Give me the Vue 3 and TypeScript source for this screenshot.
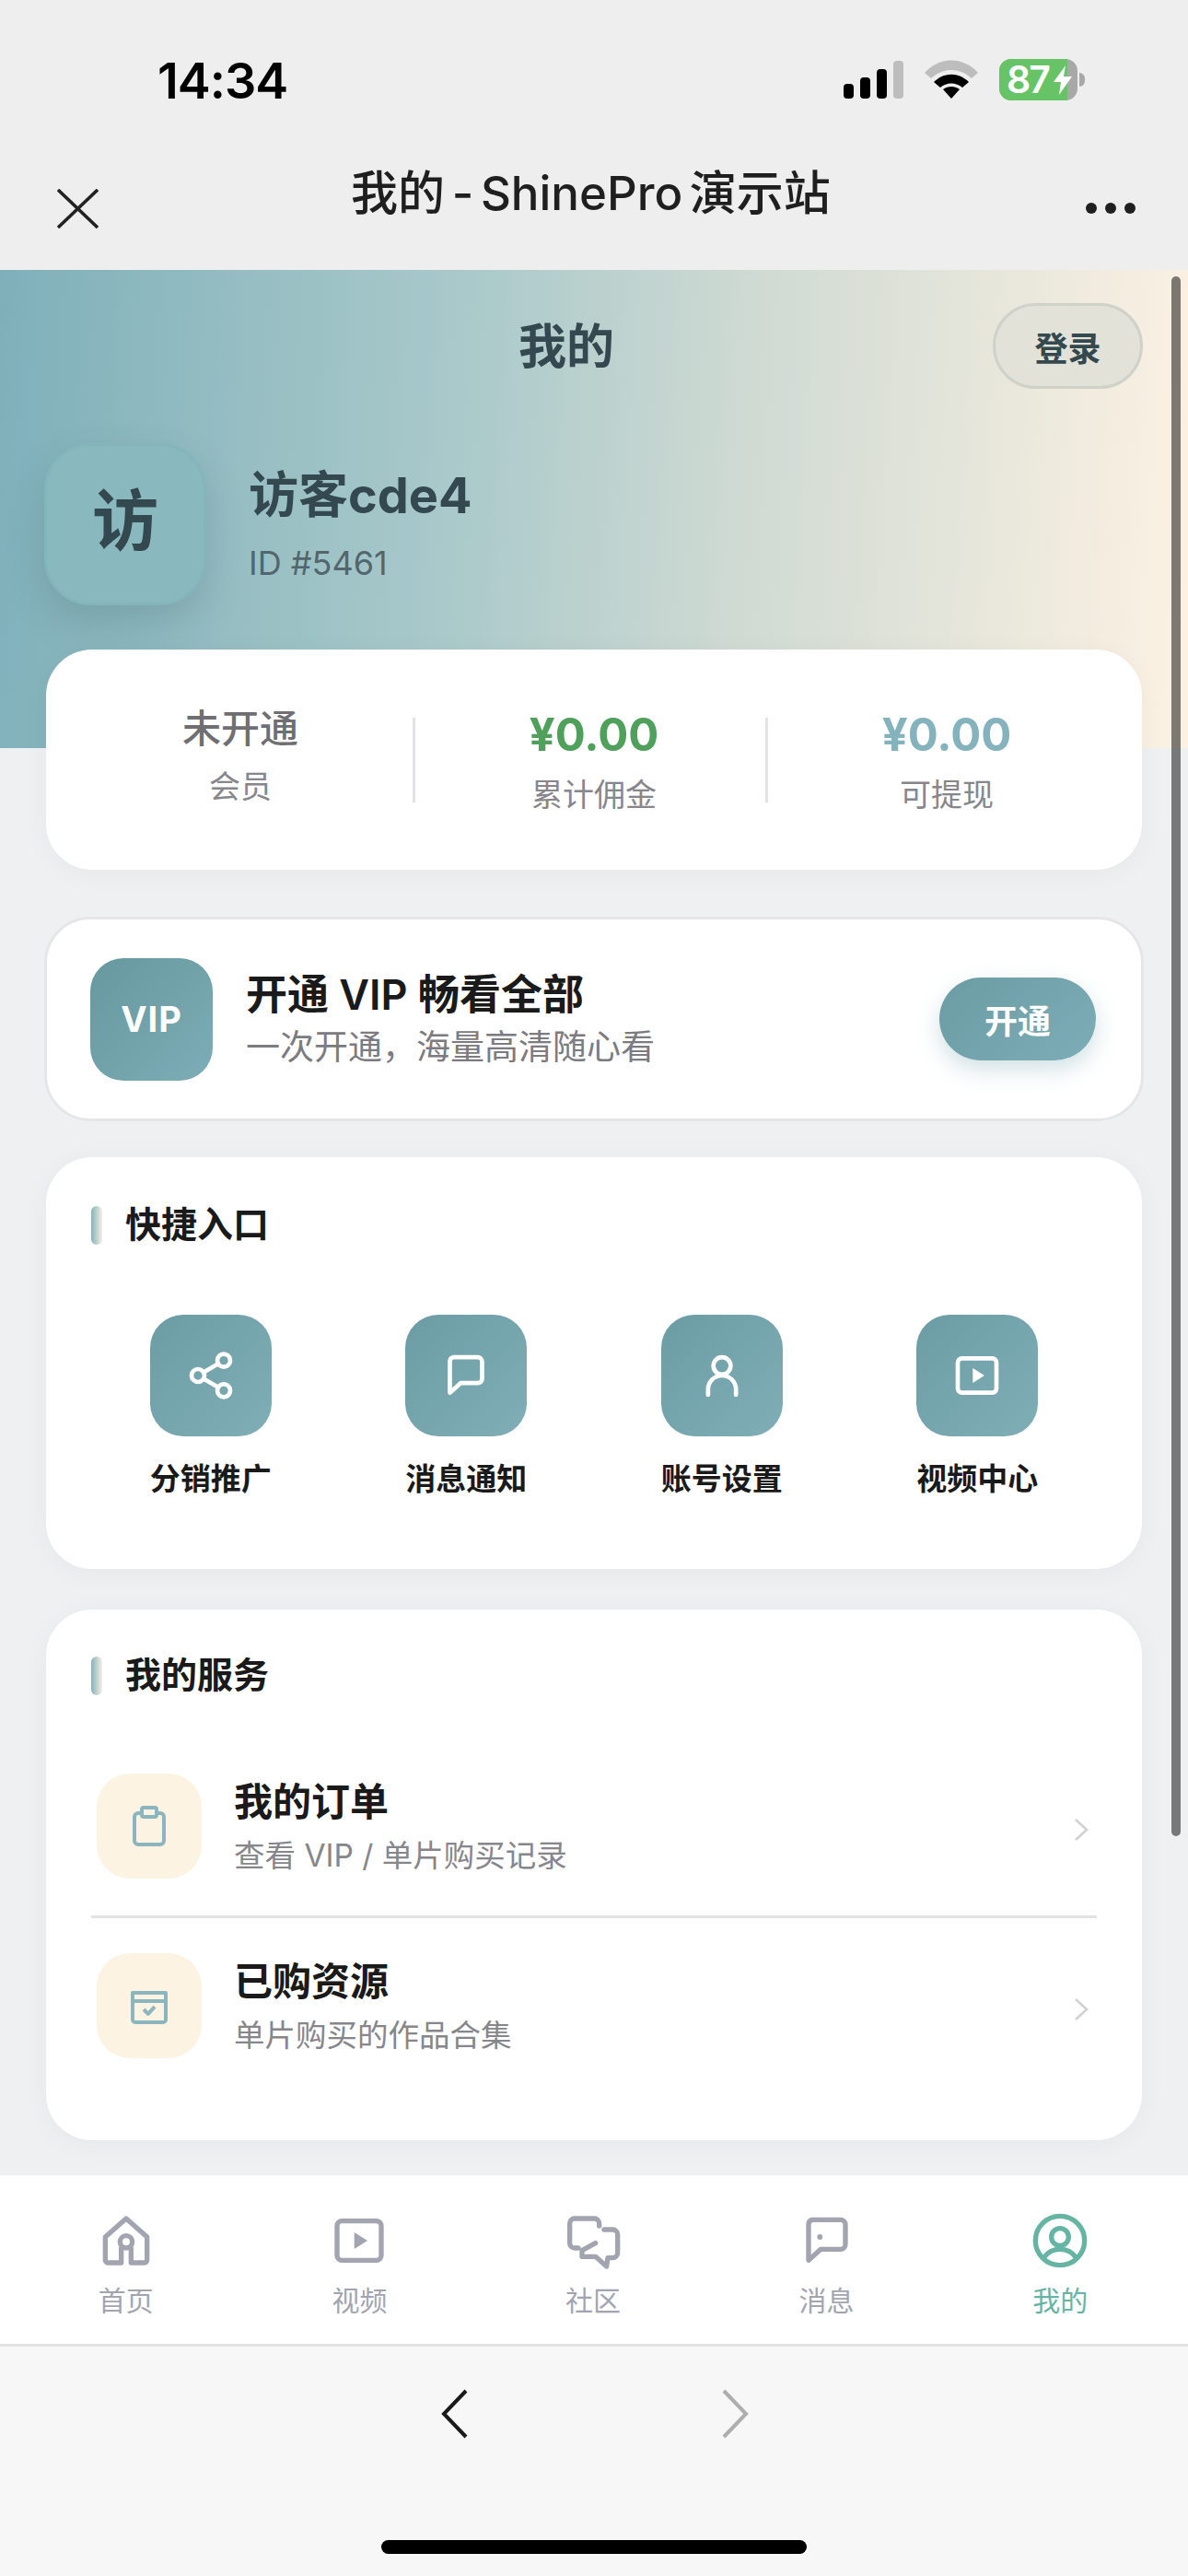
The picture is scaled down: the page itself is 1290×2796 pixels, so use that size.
<template>
  <div class="page">
    <header class="top">
      <div class="status">
        <span class="time">14:34</span>
        <div class="status-icons">
          <svg class="signal" width="65" height="41" viewBox="0 0 65 41">
            <rect x="0" y="25" width="11" height="16" rx="4" fill="#000" />
            <rect x="18" y="18" width="11" height="23" rx="4" fill="#000" />
            <rect x="36" y="9" width="11" height="32" rx="4" fill="#000" />
            <rect x="54" y="0" width="11" height="41" rx="4" fill="#bdbdbd" />
          </svg>
          <svg class="wifi" width="58" height="42" viewBox="0 0 58 42">
            <path d="M0 14 C16 -4 42 -4 58 14 L51 20 C38 8 20 8 7 20 Z" fill="#bdbdbd" />
            <path d="M10 24 C21 13 37 13 48 24 L41 30 C34 24 24 24 17 30 Z" fill="#000" />
            <path d="M20 32 C25 28 33 28 38 32 L29 42 Z" fill="#000" />
          </svg>
          <div class="battery">
            <div class="battery-fill"></div>
            <span class="battery-num">87</span>
            <svg class="bolt" width="22" height="32" viewBox="0 0 22 32">
              <path d="M14 0 L1 18 H9 L7 32 L21 12 H12 Z" fill="#fff" />
            </svg>
            <i class="battery-nub"></i>
          </div>
        </div>
      </div>
      <div class="nav">
        <svg class="close" width="45" height="43" viewBox="0 0 45 43">
          <path d="M1 1 L44 42 M44 1 L1 42" stroke="#222" stroke-width="3.6" fill="none" />
        </svg>
        <div class="nav-title">我的 - ShinePro 演示站</div>
        <div class="dots"><i></i><i></i><i></i></div>
      </div>
    </header>

    <main class="main">
      <section class="hero">
        <div class="hero-bar">
          <div class="hero-title">我的</div>
          <button class="login">登录</button>
        </div>
        <div class="profile">
          <div class="avatar"><span>访</span></div>
          <div class="profile-text">
            <div class="name">访客cde4</div>
            <div class="uid">ID #5461</div>
          </div>
        </div>
      </section>

      <div class="cards">
        <section class="card stats">
          <div class="stat stat-member">
            <div class="stat-text">未开通</div>
            <div class="stat-label">会员</div>
          </div>
          <div class="stat">
            <div class="stat-num green">¥0.00</div>
            <div class="stat-label">累计佣金</div>
          </div>
          <div class="stat">
            <div class="stat-num teal">¥0.00</div>
            <div class="stat-label">可提现</div>
          </div>
        </section>

        <section class="card vip">
          <div class="vip-tile">VIP</div>
          <div class="vip-info">
            <div class="vip-title">开通 VIP 畅看全部</div>
            <div class="vip-sub">一次开通，海量高清随心看</div>
          </div>
          <button class="vip-btn">开通</button>
        </section>

        <section class="card quick">
          <h3 class="section-title"><i></i>快捷入口</h3>
          <div class="quick-grid">
            <div v-for="item in quickItems" :key="item.label" class="quick-item">
              <div class="quick-tile">
                <svg width="56" height="56" viewBox="0 0 24 24" fill="none" stroke="#fff" stroke-width="2" stroke-linecap="round" stroke-linejoin="round">
                  <path v-for="d in item.paths" :key="d" :d="d" />
                  <path v-if="item.fill" :d="item.fill" fill="#fff" stroke="none" />
                </svg>
              </div>
              <div class="quick-label">{{ item.label }}</div>
            </div>
          </div>
        </section>

        <section class="card services">
          <h3 class="section-title"><i></i>我的服务</h3>
          <div class="service-list">
            <div v-for="item in services" :key="item.title" class="service-row">
              <div class="service-tile">
                <svg width="48" height="48" viewBox="0 0 24 24" fill="none" stroke="#8bb6bd" stroke-width="2" stroke-linejoin="round">
                  <path v-for="d in item.paths" :key="d" :d="d" />
                </svg>
              </div>
              <div class="service-info">
                <div class="service-title">{{ item.title }}</div>
                <div class="service-sub">{{ item.sub }}</div>
              </div>
              <svg class="service-arrow" width="16" height="24" viewBox="0 0 16 24" fill="none">
                <path d="M2 1 L14 12 L2 23" stroke="#d2d2d4" stroke-width="2.6" />
              </svg>
            </div>
          </div>
        </section>
      </div>

      <div class="scrollbar"></div>
    </main>

    <nav class="tabs">
      <div v-for="tab in tabs" :key="tab.label" class="tab" :class="{ active: tab.active }">
        <svg width="64" height="64" viewBox="0 0 24 24" fill="none" stroke="currentColor" stroke-width="2" stroke-linecap="round" stroke-linejoin="round">
          <path v-for="d in tab.paths" :key="d" :d="d" />
          <path v-if="tab.fill" :d="tab.fill" fill="currentColor" stroke="none" />
        </svg>
        <span>{{ tab.label }}</span>
      </div>
    </nav>

    <footer class="browser">
      <div class="browser-nav">
        <svg width="30" height="54" viewBox="0 0 30 54" fill="none">
          <path d="M27 2 L3 27 L27 52" stroke="#1a1a1a" stroke-width="4" />
        </svg>
        <svg width="30" height="54" viewBox="0 0 30 54" fill="none">
          <path d="M3 2 L27 27 L3 52" stroke="#aeaeae" stroke-width="4" />
        </svg>
      </div>
      <div class="home-bar"></div>
    </footer>
  </div>
</template>

<script setup lang="ts">
interface IconItem {
  label: string
  paths: string[]
  fill?: string
  active?: boolean
}

interface ServiceItem {
  title: string
  sub: string
  paths: string[]
}

const bubblePath = 'M6 3.5h11.5a2 2 0 0 1 2 2v8a2 2 0 0 1-2 2H9.5L4.5 20V5.5a2 2 0 0 1 1.5-2z'
const playRect = 'M5 4h14a2 2 0 0 1 2 2v12a2 2 0 0 1-2 2H5a2 2 0 0 1-2-2V6a2 2 0 0 1 2-2z'
const playArrow = 'M10 8.6 15.4 12 10 15.4z'

const quickItems: IconItem[] = [
  {
    label: '分销推广',
    paths: [
      'M15 5a3 3 0 1 0 6 0a3 3 0 1 0-6 0',
      'M3 12a3 3 0 1 0 6 0a3 3 0 1 0-6 0',
      'M15 19a3 3 0 1 0 6 0a3 3 0 1 0-6 0',
      'M8.6 13.5 15.4 17.5',
      'M15.4 6.5 8.6 10.5',
    ],
  },
  { label: '消息通知', paths: [bubblePath] },
  {
    label: '账号设置',
    paths: ['M8 7.5a4 4 0 1 0 8 0a4 4 0 1 0-8 0', 'M5.5 21v-2.5a6.5 6.5 0 0 1 13 0V21'],
  },
  { label: '视频中心', paths: [playRect], fill: playArrow },
]

const services: ServiceItem[] = [
  {
    title: '我的订单',
    sub: '查看 VIP / 单片购买记录',
    paths: ['M8 5H6a2 2 0 0 0-2 2v13a2 2 0 0 0 2 2h12a2 2 0 0 0 2-2V7a2 2 0 0 0-2-2h-2', 'M9 2h6a1 1 0 0 1 1 1v3a1 1 0 0 1-1 1H9a1 1 0 0 1-1-1V3a1 1 0 0 1 1-1z'],
  },
  {
    title: '已购资源',
    sub: '单片购买的作品合集',
    paths: ['M3 5h18v14.5a1.5 1.5 0 0 1-1.5 1.5h-15A1.5 1.5 0 0 1 3 19.5z', 'M3 9.5h18', 'M9 14l2.4 2.4L15 12.6'],
  },
]

const tabs: IconItem[] = [
  {
    label: '首页',
    paths: [
      'M10 15.2V21H4.5a1 1 0 0 1-1-1v-9.5L12 3l8.5 7.5V20a1 1 0 0 1-1 1H14v-5.8',
      'M9.5 12.5a2.5 2.5 0 1 0 5 0a2.5 2.5 0 1 0-5 0',
    ],
  },
  { label: '视频', paths: [playRect], fill: playArrow },
  {
    label: '社区',
    paths: [
      'M14.5 6V5a2 2 0 0 0-2-2h-8a2 2 0 0 0-2 2v8a2 2 0 0 0 2 2H6',
      'M16.5 7.5H20a2 2 0 0 1 2 2V17a2 2 0 0 1-2 2h-2l-.5 3.5-4.5-4H7.5V16l5.5-3',
    ],
  },
  { label: '消息', paths: [bubblePath], fill: 'M8 10.5a1.1 1.1 0 1 0 2.2 0a1.1 1.1 0 1 0-2.2 0z' },
  {
    label: '我的',
    active: true,
    paths: [
      'M2 12a10 10 0 1 0 20 0a10 10 0 1 0-20 0',
      'M8.5 10.5a3.5 3.5 0 1 0 7 0a3.5 3.5 0 1 0-7 0',
      'M5.5 18.8C7 16.6 9.5 15.5 12 15.5s5 1.1 6.5 3.3',
    ],
  },
]
</script>

<style scoped>
.page {
  position: relative;
  display: flex;
  flex-direction: column;
  width: 1290px;
  height: 2796px;
  overflow: hidden;
  background: #eff0f2;
  font-family: Inter, "Noto Sans CJK SC", sans-serif;
  color: #1a1a1a;
}

.top {
  flex: 0 0 293px;
  padding-top: 54px;
  background: #eeeeee;
}

.status {
  display: flex;
  align-items: center;
  justify-content: space-between;
  height: 64px;
  padding: 0 120px 0 171px;
}

.time {
  margin-top: 3px;
  font-size: 54px;
  font-weight: 600;
  letter-spacing: -1px;
  color: #000;
}

.status-icons {
  display: flex;
  align-items: center;
  gap: 23px;
}

.battery {
  position: relative;
  display: flex;
  align-items: center;
  width: 85px;
  height: 45px;
  border-radius: 13px;
  background: #a8a8a8;
}

.battery-fill {
  position: absolute;
  left: 0;
  top: 0;
  bottom: 0;
  width: 74px;
  border-radius: 13px 0 0 13px;
  background: #66c467;
}

.battery-num {
  position: relative;
  margin-left: 8px;
  font-size: 41px;
  line-height: 45px;
  font-weight: 600;
  letter-spacing: -2px;
  color: #fff;
}

.bolt {
  position: absolute;
  left: 58px;
  top: 7px;
}

.battery-nub {
  position: absolute;
  right: -8px;
  top: 15px;
  width: 6px;
  height: 15px;
  border-radius: 0 6px 6px 0;
  background: #a8a8a8;
}

.nav {
  display: flex;
  align-items: center;
  justify-content: space-between;
  height: 90px;
  margin-top: 63px;
  padding: 0 57px 0 62px;
}

.nav-title {
  margin-top: -40px;
  margin-left: -3px;
  font-size: 51px;
  font-weight: 500;
  word-spacing: -6px;
  color: #1f1f1f;
}

.dots {
  display: flex;
  gap: 9px;
}

.dots i {
  width: 12px;
  height: 12px;
  border-radius: 50%;
  background: #1f1f1f;
}

.main {
  position: relative;
  flex: 1;
  overflow: hidden;
}

.hero {
  height: 519px;
  padding: 36px 49px 0 48px;
  background: linear-gradient(94deg, #7fb0ba 0%, #a9c9ca 38%, #cfdad3 62%, #fdf2e3 100%);
  color: #33484f;
}

.hero-bar {
  display: flex;
  align-items: center;
}

.hero-title {
  flex: 1;
  margin-top: -6px;
  padding-left: 104px;
  text-align: center;
  font-size: 52px;
  font-weight: 600;
}

.login {
  width: 163px;
  height: 93px;
  border: 3px solid #cfd2c9;
  border-radius: 47px;
  background: #e3e2d8;
  font: 600 36px Inter, "Noto Sans CJK SC", sans-serif;
  color: #33484f;
}

.profile {
  display: flex;
  align-items: center;
  gap: 46px;
  margin-top: 59px;
}

.profile-text {
  margin-top: -4px;
}

.avatar {
  display: flex;
  align-items: center;
  justify-content: center;
  width: 176px;
  height: 176px;
  border-radius: 50px;
  border: 3px solid #84b5bc;
  background: #8ab8bf;
  box-shadow: 0 18px 40px rgba(60, 90, 100, 0.22);
  font-size: 72px;
  font-weight: 700;
}

.avatar span {
  margin-top: -20px;
}

.name {
  font-size: 54px;
  line-height: 72px;
  font-weight: 700;
}

.uid {
  margin-top: 15px;
  font-size: 36px;
  line-height: 44px;
  color: #52676d;
}

.cards {
  position: relative;
  display: flex;
  flex-direction: column;
  margin-top: -107px;
  padding: 0 50px;
}

.card {
  border-radius: 50px;
  background: #fff;
  box-shadow: 0 4px 30px rgba(0, 0, 0, 0.04);
}

.stats {
  display: flex;
  align-items: center;
  height: 239px;
  padding-left: 24px;
}

.stat {
  display: flex;
  flex-direction: column;
  align-items: center;
  flex: 0 0 383px;
  height: 92px;
  justify-content: center;
  padding-top: 3px;
  padding-left: 8px;
  border-left: 3px solid #e3e3e5;
  color: #86868b;
}

.stat-member {
  flex-basis: 374px;
  padding: 0 0 10px;
  border-left: none;
}

.stat-text {
  font-size: 42px;
  line-height: 56px;
  font-weight: 500;
  color: #6e6e73;
  flex-shrink: 0;
}

.stat-num {
  font-size: 49px;
  line-height: 60px;
  font-weight: 700;
  flex-shrink: 0;
}

.green {
  color: #4fa05a;
}

.teal {
  color: #85b3bd;
}

.stat-label {
  margin-top: 13px;
  font-size: 34px;
  line-height: 44px;
  flex-shrink: 0;
}

.vip {
  display: flex;
  align-items: center;
  height: 222px;
  margin: 51px -2px 39px;
  padding: 0 49px 0 47px;
  border: 3px solid #e6e6e9;
  box-shadow: none;
}

.vip-tile {
  display: flex;
  align-items: center;
  justify-content: center;
  width: 133px;
  height: 133px;
  border-radius: 36px;
  background: linear-gradient(135deg, #66989f, #7dadb6);
  font-size: 38px;
  font-weight: 700;
  letter-spacing: 1px;
  color: #fff;
}

.vip-info {
  flex: 1;
  margin-left: 36px;
}

.vip-title {
  font-size: 45px;
  line-height: 58px;
  font-weight: 600;
}

.vip-sub {
  margin-top: 3px;
  font-size: 37px;
  line-height: 50px;
  color: #7b7b80;
}

.vip-btn {
  width: 170px;
  height: 90px;
  border: none;
  border-radius: 45px;
  background: linear-gradient(135deg, #6b9ca4, #7dadb6);
  box-shadow: 0 10px 24px rgba(107, 156, 164, 0.3);
  font: 600 36px Inter, "Noto Sans CJK SC", sans-serif;
  color: #fff;
}

.section-title {
  display: flex;
  align-items: center;
  gap: 25px;
  height: 42px;
  margin: 0;
  font-size: 39px;
  font-weight: 600;
}

.section-title i {
  width: 12px;
  height: 42px;
  margin-top: 8px;
  border-radius: 6px;
  background: linear-gradient(90deg, #85b3bd, #f5efe2);
}

.quick {
  height: 447px;
  padding: 49px 49px 0;
}

.quick-grid {
  display: grid;
  grid-template-columns: repeat(4, 1fr);
  margin: 80px -9px 0;
}

.quick-item {
  display: flex;
  flex-direction: column;
  align-items: center;
}

.quick-tile {
  display: flex;
  align-items: center;
  justify-content: center;
  width: 132px;
  height: 132px;
  border-radius: 36px;
  background: linear-gradient(135deg, #6b9ca4, #80aeb7);
}

.quick-label {
  margin-top: 23px;
  font-size: 33px;
  line-height: 46px;
  font-weight: 600;
}

.services {
  height: 576px;
  margin-top: 44px;
  padding: 47px 49px 0;
}

.service-list {
  margin-top: 49px;
}

.service-row {
  display: flex;
  align-items: center;
  padding: 40px 0 40px 6px;
}

.service-row + .service-row {
  padding-top: 38px;
  border-top: 3px solid #e3e3e5;
}

.service-tile {
  display: flex;
  align-items: center;
  justify-content: center;
  flex: 0 0 114px;
  height: 114px;
  border-radius: 36px;
  background: #fdf3e3;
}

.service-info {
  flex: 1;
  margin-left: 35px;
  padding-top: 3px;
}

.service-title {
  font-size: 42px;
  line-height: 56px;
  font-weight: 600;
}

.service-sub {
  margin-top: 5px;
  font-size: 33.5px;
  line-height: 50px;
  color: #86868b;
}

.service-arrow {
  margin-right: 9px;
  margin-top: 8px;
}

.scrollbar {
  position: absolute;
  top: 7px;
  left: 1272px;
  width: 10px;
  height: 1693px;
  border-radius: 5px;
  background: rgba(0, 0, 0, 0.5);
}

.tabs {
  display: flex;
  flex: 0 0 186px;
  padding: 39px 12px 0 10px;
  background: #fff;
  border-bottom: 3px solid #e3e3e3;
}

.tab {
  display: flex;
  flex: 1;
  flex-direction: column;
  align-items: center;
  color: #a2a5b0;
  font-size: 30px;
  line-height: 40px;
}

.tab span {
  margin-top: 13px;
}

.tab.active {
  color: #66b5a4;
}

.browser {
  position: relative;
  flex: 0 0 249px;
  background: #f7f7f7;
}

.browser-nav {
  display: flex;
  justify-content: center;
  gap: 274px;
  padding-top: 46px;
  margin-left: 2px;
}

.home-bar {
  position: absolute;
  left: 414px;
  top: 210px;
  width: 462px;
  height: 15px;
  border-radius: 8px;
  background: #000;
}
</style>

<style>
* {
  box-sizing: border-box;
}

body {
  margin: 0;
}
</style>
